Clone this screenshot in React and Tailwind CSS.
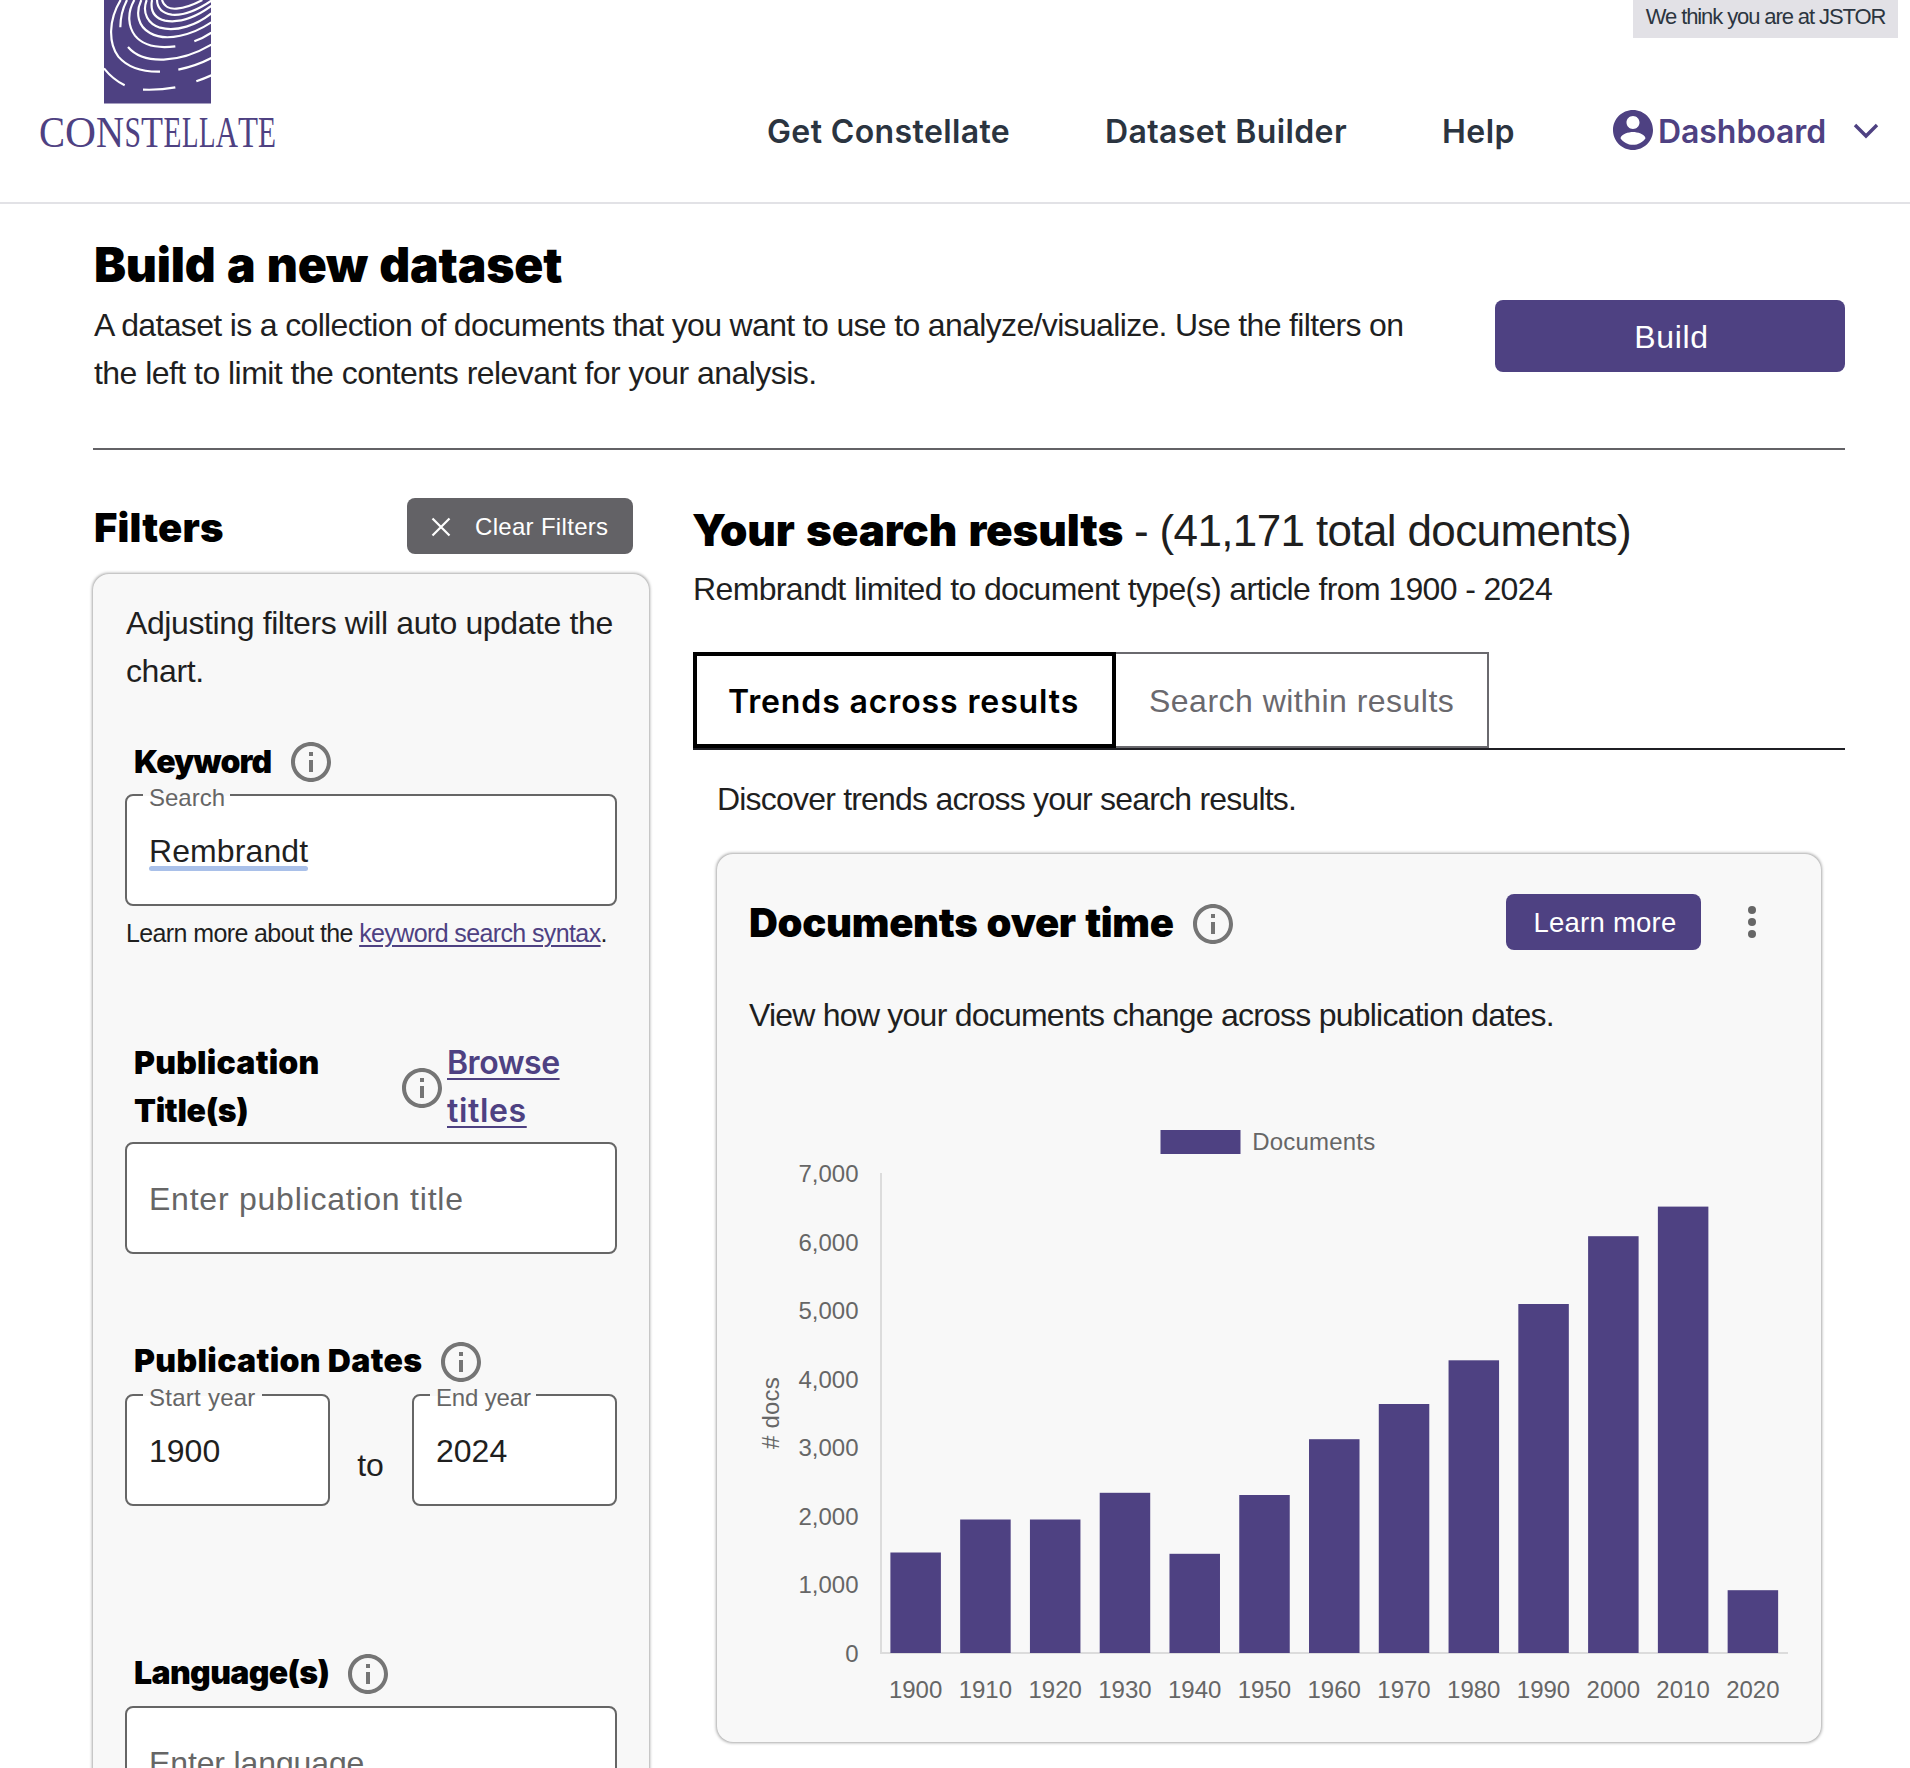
import React from 'react';

const PURPLE = '#4e4182';

function InfoIcon({ className = '' }) {
  return (
    <svg viewBox="0 0 24 24" className={`size-12 shrink-0 ${className}`} fill="#757575">
      <path d="M11 7h2v2h-2zm0 4h2v6h-2zm1-9C6.48 2 2 6.48 2 12s4.48 10 10 10 10-4.48 10-10S17.52 2 12 2zm0 18c-4.41 0-8-3.59-8-8s3.59-8 8-8 8 3.59 8 8-3.59 8-8 8z" />
    </svg>
  );
}

const RINGS = [
  'M312 205 C330 228 350 244 374 256',
  'M429 269 Q480 271 526 262',
  'M589 244 Q612 236 634 226',
  'M535 209 Q590 197 634 174',
  'M362 0 C325 60 325 130 355 170 C385 205 430 216 480 215',
  'M381 0 C368 25 361 50 361 82',
  'M403 0 C380 40 385 80 405 107 C430 138 470 146 526 139',
  'M384 141 C430 195 540 190 634 134',
  'M583 124 Q610 114 634 98',
  'M424 0 C405 40 415 80 450 99 C500 128 580 103 634 67',
  'M440 0 C425 40 445 72 480 83 C530 97 590 75 634 40',
  'M456 0 C450 35 465 55 495 62 C540 70 590 50 634 18',
  'M471 0 C472 28 490 40 515 44 C555 48 600 25 634 2',
  'M486 0 C492 20 510 28 530 26 C560 23 585 12 607 0',
];

const LETTERS = [
  ['C', 39, 26], ['O', 65, 31], ['N', 96, 28], ['S', 124.5, 16.5], ['T', 141, 22], ['E', 163.5, 18],
  ['L', 182, 16.5], ['L', 199, 16.5], ['A', 215.5, 22.5], ['T', 238, 20], ['E', 258, 18],
];

function Logo() {
  return (
    <div className="w-[240px] pl-[38px]">
      <svg viewBox="312 0 321 310.5" className="ml-[66px] block h-[103.5px] w-[107px]" fill="none" stroke="#fff" strokeWidth="6.5">
        <rect x="312" y="0" width="321" height="310.5" fill={PURPLE} stroke="none" />
        {RINGS.map((d) => <path key={d} d={d} />)}
      </svg>
      <svg viewBox="38 103.5 240 60" className="block h-[60px] w-[240px] overflow-visible" fill={PURPLE}>
        <text y="146.500" fontSize="44" fontFamily="'Liberation Serif', serif">
          {LETTERS.map(([c, x, w], i) => (
            <tspan key={i} x={x} textLength={w} lengthAdjust="spacingAndGlyphs">{c}</tspan>
          ))}
        </text>
      </svg>
    </div>
  );
}

function Header() {
  return (
    <header className="flex h-[204px] border-b-2 border-[#e2e2e6]">
      <Logo />
      <div className="ml-auto flex flex-col items-end">
        <div className="mr-3 flex h-[38px] w-[265px] items-start justify-center bg-[#e2e1e6] text-[22px] leading-[33px] tracking-[-0.05em] whitespace-nowrap text-[#2c3540]">
          We think you are at JSTOR
        </div>
        <nav className="mt-[68px] flex h-12 items-center pr-[26px] font-[Inter] text-[32px] font-semibold leading-[46px] whitespace-nowrap text-[#2b3440]">
          <a className="w-[338px] pt-[3px] tracking-[0.012em]">Get Constellate</a>
          <a className="w-[337px] pt-[3px] tracking-[0.012em]">Dataset Builder</a>
          <a className="w-[167px] pt-[3px] tracking-[0.014em]">Help</a>
          <svg viewBox="0 0 24 24" className="size-12" fill={PURPLE}>
            <path d="M12 2C6.48 2 2 6.48 2 12s4.480 10 10 10 10-4.480 10-10S17.520 2 12 2zm0 3c1.800 0 3.250 1.450 3.250 3.250S13.800 11.500 12 11.500 8.750 10.050 8.750 8.250 10.200 5 12 5zm0 14.400c-2.600 0-4.900-1.300-6.250-3.300C6 14 9.900 13 12 13s6 1 6.250 3.100C16.900 18.100 14.600 19.400 12 19.400z" />
          </svg>
          <a className="w-[191px] pt-[3px] pl-px tracking-[-0.002em] text-[#4e4182]">Dashboard</a>
          <svg viewBox="0 0 36 24" className="h-6 w-9" fill="none" stroke={PURPLE} strokeWidth="3.400">
            <path d="M7 7 L18 18 L29 7" />
          </svg>
        </nav>
      </div>
    </header>
  );
}

function Field({ label, notch = '', children, className = '' }) {
  return (
    <div className={`relative h-28 shrink-0 rounded-lg border-2 border-[#666] bg-white pt-[31px] pl-[22px] leading-[48px] ${className}`}>
      {label && (
        <span className={`absolute -top-0.5 left-4 h-0.5 bg-[#f8f8f8] pl-[6px] ${notch}`}>
          <span className="block -translate-y-[14px] text-[24px] leading-[36px] whitespace-nowrap text-[#666]">{label}</span>
        </span>
      )}
      {children}
    </div>
  );
}

function FilterTitle({ width, children, extra, iconShift = '' }) {
  return (
    <div className="flex items-center pl-[9px]">
      <span className={`shrink-0 font-[Inter] font-black text-black ${width}`}>{children}</span>
      <InfoIcon className={iconShift} />
      {extra}
    </div>
  );
}

function Filters() {
  return (
    <aside className="w-[556px] shrink-0">
      <div className="flex w-[540px] items-center justify-between">
        <h2 className="pt-[4px] pl-px font-[Inter] text-[40px] font-black leading-[48px] tracking-[0.005em] text-black">Filters</h2>
        <button className="flex h-14 w-[226px] items-center rounded-lg bg-[#636266] pt-px pl-[24px] text-[24px] tracking-[0.013em] whitespace-nowrap text-white">
          <svg viewBox="0 0 20 20" className="mr-[24px] size-5" fill="none" stroke="#fff" strokeWidth="2.200">
            <path d="M1.500 1.500 L18.500 18.500 M18.500 1.500 L1.500 18.500" />
          </svg>
          Clear Filters
        </button>
      </div>
      <div className="mt-[20px] h-[1300px] rounded-2xl bg-[#f8f8f8] px-8 pt-[25px] shadow-[0_0_3px_0.5px_rgba(0,0,0,0.34)]">
        <p className="-mr-4 pl-px leading-[48px] tracking-[-0.0122em]">Adjusting filters will auto update the<br />chart.</p>
        <div className="mt-[43px]" />
        <FilterTitle width="w-[153px] tracking-[-0.028em]">Keyword</FilterTitle>
        <Field label="Search" notch="w-[87px]" className="mt-2 w-[492px]">
          <span className="relative inline-block tracking-[0.003em]">
            Rembrandt
            <span className="absolute inset-x-0 bottom-[4px] h-[5px] rounded-full bg-[#a9c0e9]" />
          </span>
        </Field>
        <p className="mt-[7px] pl-px text-[25px] leading-[40px] tracking-[-0.0245em] whitespace-nowrap">
          Learn more about the <a className="text-[#4e4182] underline decoration-2 underline-offset-[3px]">keyword search syntax</a>.
        </p>
        <div className="mt-[85px]" />
        <FilterTitle
          width="w-[264px] leading-[48px] translate-y-px"
          iconShift="translate-y-[2px]"
          extra={
            <a className="ml-px w-[120px] translate-y-px font-[Inter] font-semibold leading-[48px] tracking-[-0.015em] text-[#4e4182] underline decoration-2 underline-offset-[4px]">
              Browse <span className="tracking-[0.02em]">titles</span>
            </a>
          }
        >
          <span className="tracking-[0.007em]">Publication</span><br /><span className="tracking-[-0.01em]">Title(s)</span>
        </FilterTitle>
        <Field className="mt-2 w-[492px]"><span className="tracking-[0.024em] text-[#666]">Enter publication title</span></Field>
        <div className="mt-[84px]" />
        <FilterTitle width="w-[303px] tracking-[0.011em] -translate-y-px">Publication Dates</FilterTitle>
        <div className="mt-2 flex">
          <Field label="Start year" notch="w-[119px] tracking-[0.008em]" className="w-[205px]">1900</Field>
          <span className="w-[81px] pt-[47px] text-center leading-[48px]">to</span>
          <Field label="End year" notch="w-[106px] tracking-[-0.005em]" className="ml-px w-[205px]">2024</Field>
        </div>
        <div className="mt-[144px]" />
        <FilterTitle width="w-[210px] tracking-[-0.02em] -translate-y-px">Language(s)</FilterTitle>
        <Field className="mt-2 w-[492px]"><span className="tracking-[-0.004em] text-[#666]">Enter language</span></Field>
      </div>
    </aside>
  );
}

const BARS = [
  [1900, 100.5], [1910, 133.5], [1920, 133.5], [1930, 160.2], [1940, 99.2], [1950, 158], [1960, 213.8],
  [1970, 249], [1980, 292.7], [1990, 349], [2000, 416.8], [2010, 446.4], [2020, 62.8],
];

function Chart() {
  return (
    <svg viewBox="717 1110 1104 632" className="block h-[632px] w-[1104px]" fontFamily="'Liberation Sans', Arial, sans-serif" fontSize="24" fill="#666">
      <rect x="1160.500" y="1130" width="80" height="24" fill={PURPLE} />
      <text x="1252.200" y="1150" letterSpacing="0.200">Documents</text>
      {[7, 6, 5, 4, 3, 2, 1, 0].map((n, i) => (
        <text key={n} x="858.500" y={1182 + i * 68.571} textAnchor="end">{n ? `${n},000` : '0'}</text>
      ))}
      <text transform="translate(778.500 1413) rotate(-90)" textAnchor="middle" letterSpacing="0.200"># docs</text>
      <path d="M881 1173V1654M880 1653H1788" stroke="#dcdcdc" strokeWidth="2" fill="none" />
      {BARS.map(([year, h], i) => (
        <g key={year}>
          <rect x={890.400 + i * 69.770} y={1653 - h} width="50.500" height={h} fill={PURPLE} />
          <text x={915.600 + i * 69.770} y="1698" textAnchor="middle">{year}</text>
        </g>
      ))}
    </svg>
  );
}

function Results() {
  return (
    <section className="ml-[44px] w-[1152px] shrink-0 pt-1">
      <h2 className="text-[44px] leading-[56px] whitespace-nowrap">
        <span className="-ml-px inline-block w-[442px] font-[Inter] font-black tracking-[-0.003em] [word-spacing:0.06em] text-black">Your search results</span>
        <span className="tracking-[-0.0145em]">- (41,171 total documents)</span>
      </h2>
      <p className="mt-[6px] leading-[48px] tracking-[-0.0197em] whitespace-nowrap">Rembrandt limited to document type(s) article from 1900 - 2024</p>
      <div className="mt-[39px] flex h-[98px] border-b-2 border-[#1f1f24] leading-[90px] whitespace-nowrap">
        <div className="h-24 w-[423px] border-4 border-black pl-[31px] font-[Inter] font-semibold tracking-[0.0275em] text-black"><span className="inline-block translate-y-px">Trends across results</span></div>
        <div className="h-24 w-[373px] border-2 border-l-0 border-[#6a696e] pt-[2px] pl-[33px] tracking-[0.015em] text-[#6a696e]">Search within results</div>
      </div>
      <div className="pl-6">
        <p className="mt-[25px] leading-[48px] tracking-[-0.025em]">Discover trends across your search results.</p>
        <div className="mt-[31px] h-[888px] w-[1104px] rounded-2xl bg-[#f8f8f8] pt-[40px] shadow-[0_0_3px_0.5px_rgba(0,0,0,0.34)]">
          <div className="flex h-14 items-center pl-8">
            <h3 className="w-[440px] translate-y-px font-[Inter] text-[40px] font-black leading-[48px] tracking-[-0.008em] [word-spacing:0.04em] whitespace-nowrap text-black">Documents over time</h3>
            <InfoIcon className="mt-1" />
            <button className="ml-[268.500px] h-14 w-[195px] rounded-lg bg-[#4e4182] pt-[2px] pl-[4px] text-[27.500px] tracking-[0.009em] text-white">Learn more</button>
            <svg viewBox="0 0 24 24" className="ml-[27px] size-12" fill="#666">
              <circle cx="12" cy="6" r="2" /><circle cx="12" cy="12" r="2" /><circle cx="12" cy="18" r="2" />
            </svg>
          </div>
          <p className="mt-[41px] pl-8 leading-[48px] tracking-[-0.024em]">View how your documents change across publication dates.</p>
          <div className="mt-[71px]"><Chart /></div>
        </div>
      </div>
    </section>
  );
}

export default function App() {
  return (
    <div className="h-[1768px] w-[1910px] overflow-hidden bg-white font-['Liberation_Sans',Arial,sans-serif] text-[32px] text-[#1f1f1f]">
      <Header />
      <main className="pt-6 pl-[93px]">
        <div className="flex h-[220px] w-[1752px] justify-between">
          <div className="whitespace-nowrap">
            <h1 className="pl-px font-[Inter] text-[48px] font-black leading-[73px] tracking-[-0.004em] [word-spacing:0.04em] text-black">Build a new dataset</h1>
            <p className="pl-px leading-[48px] tracking-[-0.0205em]">
              A dataset is a collection of documents that you want to use to analyze/visualize. Use the filters on<br />
              <span className="tracking-[-0.017em]">the left to limit the contents relevant for your analysis.</span>
            </p>
          </div>
          <button className="mt-[72px] h-[72px] w-[350px] rounded-lg bg-[#4e4182] pt-px pl-[3px] tracking-[0.022em] text-white">Build</button>
        </div>
        <hr className="h-0.5 w-[1752px] border-0 bg-[#636266]" />
        <div className="mt-12 flex">
          <Filters />
          <Results />
        </div>
      </main>
    </div>
  );
}
